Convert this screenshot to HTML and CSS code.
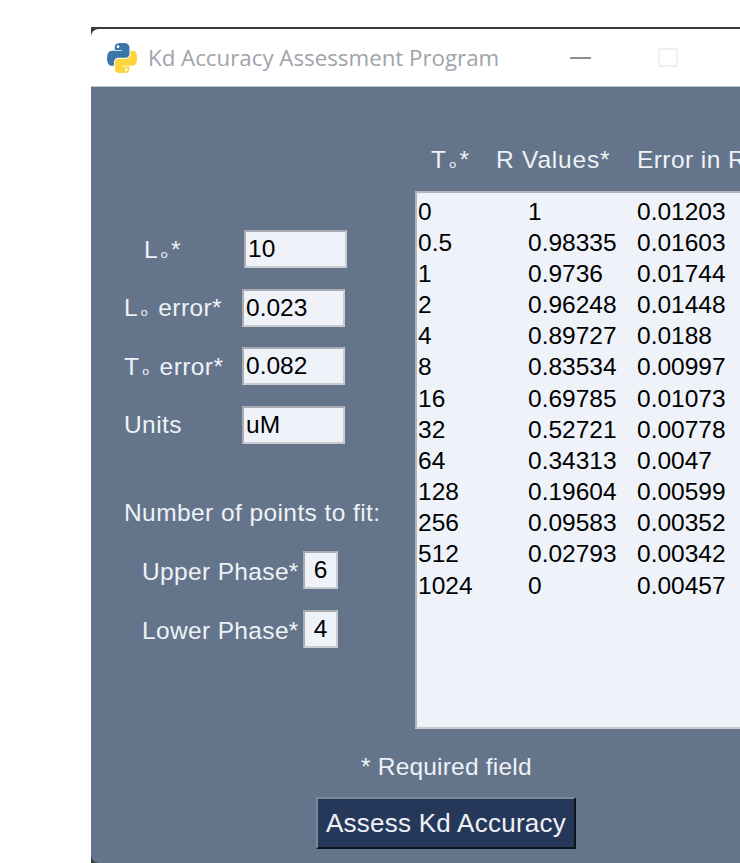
FILE: index.html
```html
<!DOCTYPE html>
<html lang="en">
<head>
<meta charset="utf-8">
<title>Kd Accuracy Assessment Program</title>
<link rel="stylesheet" href="styles.css">
</head>
<body>
<div class="backdrop">
<div class="window">
  <header class="titlebar">
    <svg class="app-icon" viewBox="0 0 110 110" aria-hidden="true">
      <path class="snake-blue" fill-rule="evenodd" d="M54.919.001c-4.584.022-8.961.413-12.812 1.095C30.762 3.099 28.7 7.295 28.7 15.032v10.219h26.813v3.406H18.638c-7.793 0-14.616 4.684-16.75 13.594-2.462 10.213-2.571 16.586 0 27.25 1.906 7.938 6.457 13.594 14.25 13.594h9.219V70.844c0-8.85 7.657-16.656 16.75-16.656h26.781c7.454 0 13.406-6.138 13.406-13.625V15.032c0-7.266-6.13-12.725-13.406-13.937C63.281.328 59.502-.02 54.919.001zM40.419 8.22c2.77 0 5.031 2.299 5.031 5.125 0 2.816-2.262 5.094-5.031 5.094-2.78 0-5.031-2.278-5.031-5.094 0-2.826 2.251-5.125 5.031-5.125z"/>
      <path class="snake-yellow" fill-rule="evenodd" d="M85.638 28.657v11.906c0 9.231-7.826 17-16.75 17H42.106c-7.336 0-13.406 6.278-13.406 13.625v25.531c0 7.266 6.319 11.54 13.406 13.625 8.487 2.496 16.626 2.947 26.781 0 6.75-1.954 13.406-5.888 13.406-13.625V86.501H55.513v-3.405H95.7c7.793 0 10.696-5.436 13.406-13.594 2.8-8.399 2.68-16.476 0-27.25-1.926-7.757-5.604-13.594-13.406-13.594H85.638zM70.575 93.313c2.78 0 5.031 2.278 5.031 5.094 0 2.826-2.251 5.125-5.031 5.125-2.77 0-5.031-2.299-5.031-5.125 0-2.816 2.262-5.094 5.031-5.094z"/>
    </svg>
    <span class="app-title">Kd Accuracy Assessment Program</span>
    <span class="win-min"></span>
    <span class="win-max"></span>
  </header>

  <main class="content">
    <div class="columns">
      <section class="params">
        <div class="field field-first"><label class="field-label">L<span class="sub">ₒ</span>*</label><input class="entry" value="10"></div>
        <div class="field"><label class="field-label">L<span class="sub">ₒ</span> error*</label><input class="entry" value="0.023"></div>
        <div class="field"><label class="field-label">T<span class="sub">ₒ</span> error*</label><input class="entry" value="0.082"></div>
        <div class="field"><label class="field-label">Units</label><input class="entry" value="uM"></div>
        <p class="fit-heading">Number of points to fit:</p>
        <div class="phase"><label class="phase-label">Upper Phase*</label><input class="entry entry-small" value="6"></div>
        <div class="phase"><label class="phase-label">Lower Phase*</label><input class="entry entry-small" value="4"></div>
      </section>

      <section class="data">
        <div class="data-head">
          <span class="head-t">T<span class="sub">ₒ</span>*</span>
          <span class="head-r">R Values*</span>
          <span class="head-e">Error in R</span>
        </div>
        <div class="data-box">
          <div class="data-col col-t">0<br>0.5<br>1<br>2<br>4<br>8<br>16<br>32<br>64<br>128<br>256<br>512<br>1024</div>
          <div class="data-col col-r">1<br>0.98335<br>0.9736<br>0.96248<br>0.89727<br>0.83534<br>0.69785<br>0.52721<br>0.34313<br>0.19604<br>0.09583<br>0.02793<br>0</div>
          <div class="data-col col-e">0.01203<br>0.01603<br>0.01744<br>0.01448<br>0.0188<br>0.00997<br>0.01073<br>0.00778<br>0.0047<br>0.00599<br>0.00352<br>0.00342<br>0.00457</div>
        </div>
      </section>
    </div>

    <footer class="actions">
      <p class="note">* Required field</p>
      <button class="assess" type="button">Assess Kd Accuracy</button>
    </footer>
  </main>
</div>
</div>
</body>
</html>
```

FILE: styles.css
```css
html, body {
  margin: 0;
  height: 863px;
  overflow: hidden;
  background: #fff;
}

body {
  padding: 27px 0 0 91px;
  box-sizing: border-box;
  font-family: "Liberation Sans", Arial, sans-serif;
  font-size: 24.5px;
}

/* Dark edge of whatever sits behind the window; shows through its rounded corners */
.backdrop {
  width: 720px;
  height: 836px;
  padding-top: 2px;
  box-sizing: border-box;
  background: #3a3a3a;
}

.window {
  height: 834px;
  border-radius: 8px 0 0 8px;
  overflow: hidden;
  background: #64748a;
}

/* Title bar */
.titlebar {
  display: flex;
  align-items: center;
  height: 58px;
  padding-left: 16px;
  background: #fff;
  border-bottom: 1px solid #c0c6ce;
  box-sizing: border-box;
}

.app-icon {
  width: 30px;
  height: 30px;
  flex: none;
}

.snake-blue { fill: #3a76a8; }
.snake-yellow { fill: #ffd43e; }

.app-title {
  margin-left: 11px;
  width: 422px;
  flex: none;
  font-family: "Open Sans", sans-serif;
  font-size: 22.3px;
  color: #a0a3ac;
  white-space: nowrap;
}

.win-min {
  width: 21px;
  height: 2px;
  flex: none;
  background: #8f8f8f;
}

.win-max {
  width: 20px;
  height: 19px;
  margin-left: 67px;
  flex: none;
  box-sizing: border-box;
  border: 2px solid #f0f0f0;
  border-radius: 2px;
}

/* Body of the window */
.content {
  color: #eef2f7;
  letter-spacing: 0.42px;
}

.columns {
  display: flex;
  height: 642px;
}

/* Subscript zero of L0 and T0 */
.sub {
  display: inline-block;
  width: 13px;
  font-family: "DejaVu Sans", sans-serif;
  font-size: 19px;
  line-height: 1;
  letter-spacing: 0;
  text-align: center;
}

/* Parameter column */
.params {
  width: 324px;
  flex: none;
  padding: 142.5px 0 0 33px;
  box-sizing: border-box;
}

.field {
  display: flex;
  align-items: center;
  height: 39px;
  margin-bottom: 19.5px;
}

.field-label {
  width: 118px;
  flex: none;
  padding-top: 1px;
}

.field-first {
  padding-left: 20px;
}

.field-first .field-label {
  width: 100px;
}

.entry {
  width: 103px;
  height: 38px;
  padding: 0 2px;
  margin: 0;
  box-sizing: border-box;
  border: 2px solid;
  border-color: #a9adb3 #c8ccd1 #c8ccd1 #a9adb3;
  border-radius: 0;
  background: #eff3f9;
  color: #000;
  font: inherit;
  letter-spacing: 0;
  outline: none;
}

.entry-small {
  width: 35px;
  text-align: center;
}

.fit-heading {
  margin: 55px 0 0;
  height: 28px;
  line-height: 28px;
  white-space: nowrap;
}

.phase {
  display: flex;
  align-items: center;
  height: 39px;
  padding-left: 18px;
  margin-top: 19.5px;
}

.fit-heading + .phase {
  margin-top: 23.5px;
}

.phase-label {
  width: 161px;
  flex: none;
  padding-top: 4px;
  white-space: nowrap;
  letter-spacing: 0.35px;
}

/* Data column */
.data {
  flex: none;
  width: 396px;
}

.data-head {
  display: flex;
  height: 104px;
  padding-top: 59px;
  box-sizing: border-box;
  line-height: 28px;
  white-space: nowrap;
}

.head-t { margin-left: 16px; width: 65px; flex: none; }
.head-r { width: 141px; flex: none; letter-spacing: 0.8px; }

.data-box {
  display: flex;
  height: 538px;
  padding: 2.5px 0 0 1px;
  box-sizing: border-box;
  border-top: 2px solid #b3b7bd;
  border-left: 2px solid #b3b7bd;
  border-bottom: 2px solid #c8ccd1;
  background: #eff3f9;
  color: #000;
  line-height: 31.17px;
  letter-spacing: 0;
}

.data-col {
  flex: none;
}

.col-t { width: 110px; }
.col-r { width: 109px; }

/* Footer */
.actions {
  display: flex;
  flex-direction: column;
  align-items: flex-start;
  padding-left: 225px;
}

.note {
  margin: 24px 0 0 45px;
  height: 28px;
  line-height: 28px;
  white-space: nowrap;
  letter-spacing: 0.2px;
}

.assess {
  width: 260px;
  height: 52px;
  margin-top: 16px;
  padding: 0;
  box-sizing: border-box;
  border: 2px solid;
  border-color: #7c889b #0e1420 #0e1420 #7c889b;
  border-radius: 0;
  background: #263859;
  color: #eef2f7;
  font: inherit;
  font-size: 26px;
  letter-spacing: 0.25px;
  white-space: nowrap;
}
```
